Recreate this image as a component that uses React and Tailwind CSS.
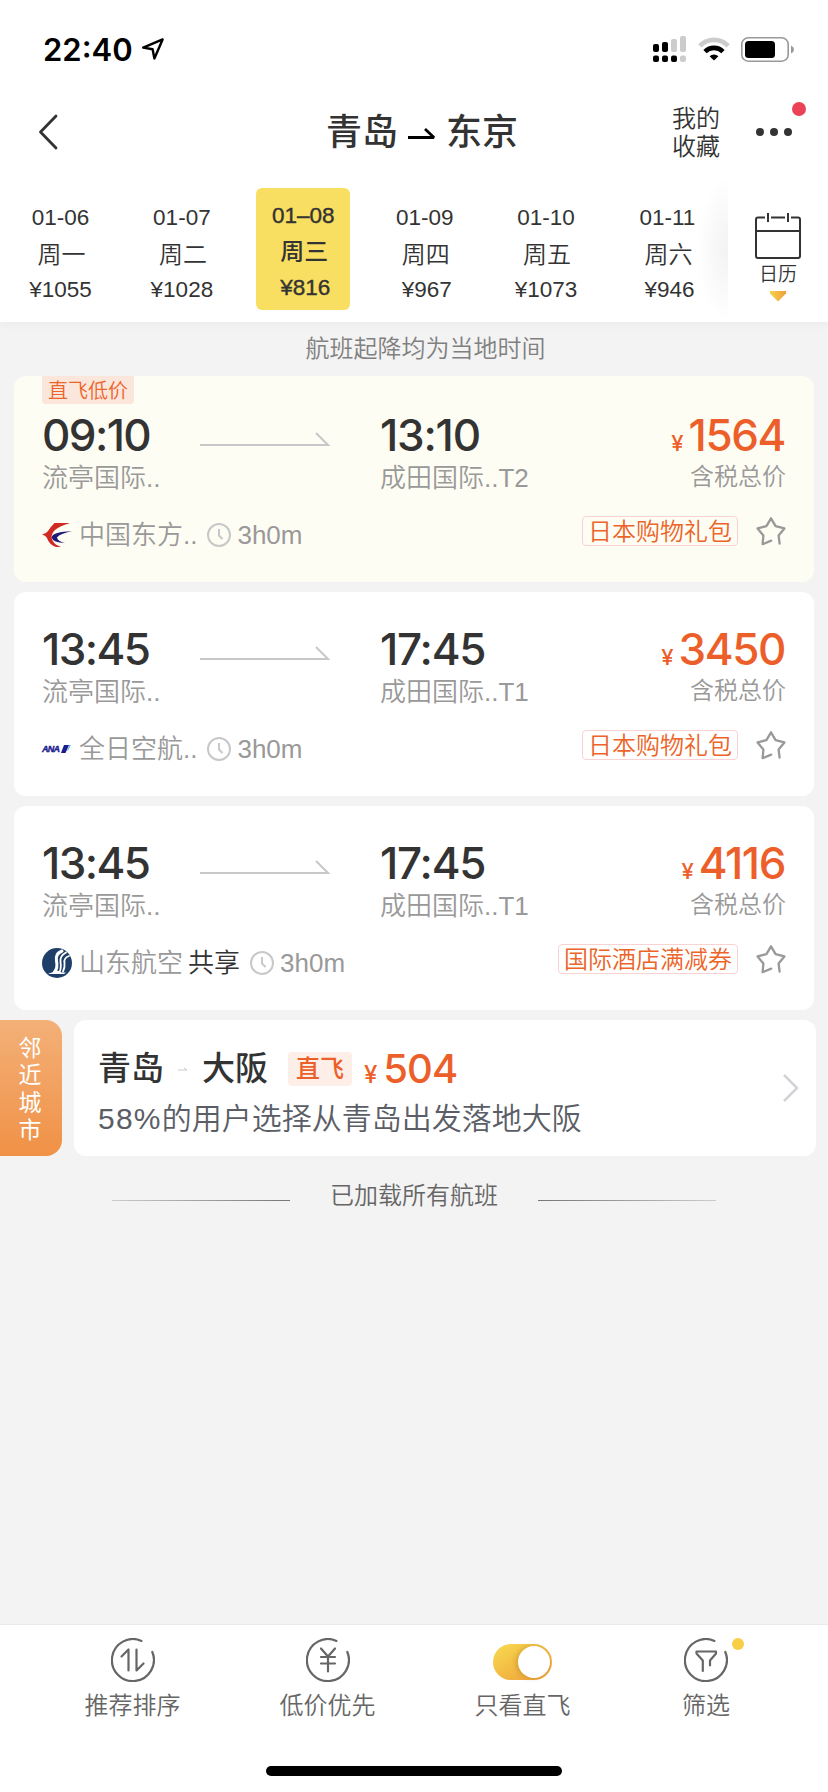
import React, { useState } from "react";

const dates = [
  { day: "01-06", week: "周一", price: 1055 },
  { day: "01-07", week: "周二", price: 1028 },
  { day: "01–08", week: "周三", price: 816 },
  { day: "01-09", week: "周四", price: 967 },
  { day: "01-10", week: "周五", price: 1073 },
  { day: "01-11", week: "周六", price: 946 },
];

const flights = [
  {
    id: 1,
    label: "直飞低价",
    depart: "09:10",
    from: "流亭国际..",
    arrive: "13:10",
    to: "成田国际..T2",
    airline: "中国东方..",
    logo: "mu",
    duration: "3h0m",
    price: 1564,
    coupon: "日本购物礼包",
  },
  {
    id: 2,
    depart: "13:45",
    from: "流亭国际..",
    arrive: "17:45",
    to: "成田国际..T1",
    airline: "全日空航..",
    logo: "nh",
    duration: "3h0m",
    price: 3450,
    coupon: "日本购物礼包",
  },
  {
    id: 3,
    depart: "13:45",
    from: "流亭国际..",
    arrive: "17:45",
    to: "成田国际..T1",
    airline: "山东航空",
    shared: true,
    logo: "sc",
    duration: "3h0m",
    price: 4116,
    coupon: "国际酒店满减券",
  },
];

const StatusBar = () => (
  <div className="h-[88px] flex items-center justify-between pl-[43px] pr-[34px] pt-[10px]">
    <div className="flex items-center">
      <span className="mt-[2px] font-['Inter'] font-semibold text-[31px] leading-[40px] text-black">22:40</span>
      <svg className="ml-[8px]" width="24" height="24" viewBox="0 0 24 24" fill="none">
        <path
          d="M2.2 10.6 L21.6 2.4 L13.4 21.4 L11.6 12.2 Z"
          stroke="#000"
          strokeWidth="2.4"
          strokeLinejoin="round"
        />
      </svg>
    </div>
    <div className="flex items-center gap-[11.500px]">
      <svg width="33" height="27" viewBox="0 0 33 27">
        <g fill="#000">
          <rect x="0" y="8" width="6" height="8" rx="2" />
          <rect x="9" y="6" width="6" height="10" rx="2" />
          <rect x="0" y="19.500" width="6" height="6.500" rx="2" />
          <rect x="9" y="19.500" width="6" height="6.500" rx="2" />
          <rect x="18" y="19.500" width="6" height="6.500" rx="2" />
        </g>
        <g fill="#ccc">
          <rect x="18" y="3" width="6" height="13" rx="2" />
          <rect x="27" y="0" width="6" height="16" rx="2" />
          <rect x="27" y="19.500" width="6" height="6.500" rx="2" />
        </g>
      </svg>
      <svg width="32" height="24" viewBox="0 0 32 24" fill="none">
        <path d="M1.800 8.800 A20 20 0 0 1 30.200 8.800" stroke="#ccc" strokeWidth="4.600" />
        <path d="M7 14.600 A12.700 12.700 0 0 1 25 14.600" stroke="#000" strokeWidth="4.600" />
        <path d="M16 23.500 L11.600 19.200 A6.300 6.300 0 0 1 20.400 19.200 Z" fill="#000" />
      </svg>
      <svg width="53" height="25" viewBox="0 0 53 25">
        <rect x="0.800" y="0.800" width="46.400" height="23.400" rx="6.500" fill="none" stroke="#999" strokeWidth="1.600" />
        <rect x="4" y="4" width="30" height="17" rx="3.500" fill="#000" />
        <path d="M50 8.500 Q53 10 53 12.500 Q53 15 50 16.500 Z" fill="#999" />
      </svg>
    </div>
  </div>
);

const Header = () => (
  <div className="h-[88px] flex items-center pl-[38px] pr-[29px]">
    <svg width="20" height="36" viewBox="0 0 20 36" fill="none">
      <path d="M18 2 L2.500 18 L18 34" stroke="#333" strokeWidth="2.800" strokeLinecap="round" strokeLinejoin="round" />
    </svg>
    <div className="ml-[268px] pt-[2px] flex items-center text-[36px] leading-[44px] font-medium text-[#333]">
      <span>青岛</span>
      <svg className="mx-[9px] mt-px" width="30" height="20" viewBox="0 0 30 20" fill="none">
        <path d="M1 13.500 H27 L18 5" stroke="#000" strokeWidth="2.800" strokeLinejoin="bevel" />
      </svg>
      <span>东京</span>
    </div>
    <div className="ml-auto w-12 pt-[2px] text-2xl leading-[28px] text-[#333]">我的收藏</div>
    <div className="relative ml-[36px] flex gap-[6px]">
      <i className="size-2 rounded-full bg-[#333]" />
      <i className="size-2 rounded-full bg-[#333]" />
      <i className="size-2 rounded-full bg-[#333]" />
      <i className="absolute -top-[26px] left-[36px] size-[14px] rounded-full bg-[#ec4255]" />
    </div>
    <div className="w-[7px]" />
  </div>
);

const DateStrip = () => {
  const [active, setActive] = useState(2);

  return (
    <div className="flex text-[#333]">
      <div className="relative w-[728px] overflow-hidden">
        <div className="flex gap-[27.400px] pl-[13px] pt-3 pb-3">
          {dates.map((item, index) => (
            <button
              key={item.day}
              onClick={() => setActive(index)}
              className={`w-[94px] h-[122px] shrink-0 rounded-md text-[22.500px] text-center ${
                index === active ? "bg-[#f9df61] font-medium pt-[9px] pb-[4px]" : "pt-[10px] pb-[3px]"
              }`}
            >
              <p className={`leading-[34px] pl-px ${index === active ? "[-webkit-text-stroke:0.4px_#333]" : ""}`}>
                {item.day}
              </p>
              <p className={`text-2xl pl-[3px] ${index === active ? "leading-[38px]" : "leading-[39px]"}`}>
                {item.week}
              </p>
              <p
                className={`${index === active ? "leading-[33px] [-webkit-text-stroke:0.4px_#333]" : "leading-[31px]"} ${
                  item.price < 1000 ? "pl-[5px]" : "pl-px"
                }`}
              >
                ¥{item.price}
              </p>
            </button>
          ))}
        </div>
        <div className="absolute right-0 top-0 bottom-0 w-8 bg-[radial-gradient(ellipse_at_right,rgba(0,0,0,0.05),transparent_70%)]" />
      </div>
      <div className="flex-1 flex flex-col items-center pt-[35px]">
        <svg width="48" height="49" viewBox="0 0 48 49" fill="none" stroke="#333" strokeWidth="2">
          <path d="M11 6.500 H4 Q2 6.500 2 8.500 V45 Q2 47 4 47 H44 Q46 47 46 45 V8.500 Q46 6.500 44 6.500 H37" />
          <path d="M17 6.500 H31 M14 2 V11 M34 2 V11 M2 20 H46" />
        </svg>
        <p className="text-[19px] leading-[26px] mt-[2px]">日历</p>
        <svg className="mt-[3px]" width="16" height="11" viewBox="0 0 16 11">
          <defs>
            <linearGradient id="tri">
              <stop offset="0" stopColor="#f6d24c" />
              <stop offset="1" stopColor="#ef9f3c" />
            </linearGradient>
          </defs>
          <path d="M0 0 H16 V2.500 L8 10.500 L0 2.500 Z" fill="url(#tri)" />
        </svg>
      </div>
    </div>
  );
};

const AirlineLogo = ({ code }) => {
  if (code === "mu") {
    return (
      <svg width="30" height="24" viewBox="0 0 30 24">
        <path d="M12.500 0 H28 Q17 3 12 8 Q8 13 10.500 17.500 Q13 22 19 24 H14 Q7 21.500 5 15 Q3.500 12 0 11.500 Q4 11 6 8 Q8.500 4 12.500 0 Z" fill="#d02a22" />
        <path d="M30 8.300 Q18 10.500 15 14.500 Q15.500 18 23 20 Q11 19.500 9.500 14.500 Q11 8.500 30 8.300 Z" fill="#1f1a78" />
      </svg>
    );
  }
  if (code === "nh") {
    return (
      <span className="w-[30px] flex items-center text-[#1c1c8c]">
        <span className="text-[9px] leading-[10px] font-bold italic tracking-[-0.800px] [-webkit-text-stroke:0.4px_#1c1c8c]">
          ANA
        </span>
        <svg className="ml-px" width="11" height="8" viewBox="0 0 11 8">
          <path d="M4 0 H9 L5.500 8 H1 Z" fill="#1c1c8c" />
          <path d="M9.300 0 H11 L8 5.500 H6.900 Z" fill="#5cb4ea" />
        </svg>
      </span>
    );
  }
  return (
    <svg width="30" height="30" viewBox="0 0 30 30">
      <circle cx="15" cy="15" r="15" fill="#1f3f68" />
      <g fill="none" stroke="#fff" strokeLinecap="round">
        <path d="M20 3 Q13 6 14.500 13 Q16 20 12.500 24" strokeWidth="3" />
        <path d="M24 4.500 Q17.500 8 18.500 14 Q19.500 20 17.500 24" strokeWidth="1.800" />
        <path d="M27 8 Q21.500 10 22.500 15 Q23 20 21 23.500" strokeWidth="1.800" />
      </g>
      <path d="M6 26 Q11 24.500 14 22 L20 24.500 H24 L22 26 Z" fill="#fff" />
    </svg>
  );
};

const ClockIcon = () => (
  <svg width="24" height="24" viewBox="0 0 24 24" fill="none" stroke="#c8c8c8" strokeWidth="2">
    <circle cx="12" cy="12" r="11" />
    <path d="M12 6 V12.500 L15.500 16" />
  </svg>
);

const StarIcon = () => (
  <svg width="30" height="30" viewBox="0 0 30 30" fill="none">
    <path
      d="M23.600 27.500 L22.600 19.500 L28.400 12.400 L19.600 10.200 L15 2.300 L10.400 10.200 L1.600 12.400 L7.400 19.500 L6.600 28.200 L15.200 24.600"
      stroke="#999"
      strokeWidth="2.300"
      strokeLinecap="round"
      strokeLinejoin="round"
    />
  </svg>
);

const FlightCard = ({ flight }) => (
  <div
    className={`relative rounded-xl px-7 pb-7 ${
      flight.label ? "bg-[#fefdf4] h-[206px] pt-[37px]" : "bg-white h-[204px] pt-[35px]"
    }`}
  >
    {flight.label && (
      <span className="absolute top-0 left-7 h-7 px-[6px] rounded-b bg-[#fbe6dc] text-[#ec6428] text-[20px] leading-[31px]">
        {flight.label}
      </span>
    )}
    <div className="flex items-start text-[26px] leading-[28px] text-[#999]">
      <div className="w-[158px]">
        <p className="font-['Inter'] font-medium text-[44px] leading-[44px] tracking-[-1.600px] text-[#333]">
          {flight.depart}
        </p>
        <p className="mt-[7px]">{flight.from}</p>
      </div>
      <svg className="mt-[18px]" width="130" height="18" viewBox="0 0 130 18" fill="none">
        <path d="M0 14 H128 L116 2" stroke="#c8c8c8" strokeWidth="2" />
      </svg>
      <div className="ml-[50px]">
        <p className="font-['Inter'] font-medium text-[44px] leading-[44px] tracking-[-1.200px] text-[#333]">
          {flight.arrive}
        </p>
        <p className="mt-[7px]">{flight.to}</p>
      </div>
      <div className="ml-auto text-right">
        <p className="font-['Inter'] font-medium text-[44px] leading-[44px] tracking-[-1.400px] pr-px text-[#ec5f2a]">
          <span className="text-[22px] leading-none tracking-normal mr-[5px]">¥</span>
          {flight.price}
        </p>
        <p className="mt-[6px] text-2xl leading-[28px]">含税总价</p>
      </div>
    </div>
    <div className="flex items-start justify-between mt-[24px]">
      <div className="flex items-center h-9 mt-px text-[26px] text-[#999]">
        <AirlineLogo code={flight.logo} />
        <span className="ml-[7px]">{flight.airline}</span>
        {flight.shared && <span className="ml-[5px] text-[#333]">共享</span>}
        <span className="ml-[10px] mr-[6px]">
          <ClockIcon />
        </span>
        <span>{flight.duration}</span>
      </div>
      <div className="flex items-center gap-[18px]">
        <span className="h-[30px] px-[5px] border border-[#f9d3d3] rounded text-2xl leading-[29px] text-[#ec6428]">
          {flight.coupon}
        </span>
        <StarIcon />
      </div>
    </div>
  </div>
);

const NearbyCity = () => (
  <div className="flex mt-[10px] h-[136px]">
    <div className="w-[62px] rounded-r-2xl bg-linear-to-b from-[#f3b077] to-[#f09145] flex flex-col items-center justify-center pt-[3px] pr-[2px] text-[23px] leading-[27.500px] font-normal text-white">
      <span>邻</span>
      <span>近</span>
      <span>城</span>
      <span>市</span>
    </div>
    <div className="ml-3 mr-3 flex-1 flex items-center justify-between bg-white rounded-xl pl-6 pr-4">
      <div className="pt-[11px]">
        <div className="flex items-center h-10 text-[33px] font-medium text-[#333]">
          <span>青岛</span>
          <svg className="mx-[14px]" width="10" height="4" viewBox="0 0 10 4">
            <path d="M0 3 H9 L6 1" stroke="#ccc" fill="none" />
          </svg>
          <span>大阪</span>
          <span className="ml-5 h-[34px] px-2 rounded bg-[#fdeee8] text-2xl leading-[34px] text-[#ec5f2a]">
            直飞
          </span>
          <p className="ml-3 font-['Inter'] text-[40px] leading-[40px] tracking-[-1px] text-[#ec5f2a]">
            <span className="text-2xl leading-none tracking-normal mr-[6px]">¥</span>
            504
          </p>
        </div>
        <p className="mt-[10px] text-[30px] leading-[40px] text-[#5b5e66]">
          <span className="tracking-[1.200px]">58%</span>的用户选择从青岛出发落地大阪
        </p>
      </div>
      <svg width="18" height="30" viewBox="0 0 18 30" fill="none">
        <path d="M2 2 L15 15 L2 28" stroke="#d2d2d8" strokeWidth="2.500" />
      </svg>
    </div>
  </div>
);

// circle with a gap at the upper right, shared by the round tab icons
const RingIcon = ({ children }) => (
  <svg width="44" height="44" viewBox="0 0 44 44" fill="none" stroke="#666" strokeWidth="2.200" strokeLinecap="round" strokeLinejoin="round">
    <path d="M30.500 2.900 A21 21 0 1 0 41.300 14" />
    {children}
  </svg>
);

const BottomBar = () => {
  const [directOnly, setDirectOnly] = useState(true);

  return (
    <div className="relative h-[168px] bg-white border-t border-[#ebebeb] flex items-start pl-[35px] pt-[13px] text-2xl leading-[30px] text-[#666]">
      <button className="w-[195px] flex flex-col items-center gap-[9px]">
        <RingIcon>
          <path d="M10.500 18.500 L17.500 11.500 V32.500 M25.500 11.500 V32.500 L32.500 25.500" />
        </RingIcon>
        推荐排序
      </button>
      <button className="w-[195px] flex flex-col items-center gap-[9px]">
        <RingIcon>
          <path d="M15 10.500 L22 18.500 L29 10.500 M15 19 H29 M15 25.500 H29 M22 18.500 V33.500" />
        </RingIcon>
        低价优先
      </button>
      <button className="w-[195px] flex flex-col items-center gap-[9px]" onClick={() => setDirectOnly(!directOnly)}>
        <span className="h-11 pt-[6px]">
          <span
            className={`flex w-[59px] h-9 rounded-full p-[2px] ${
              directOnly ? "justify-end bg-linear-to-br from-[#f8db50] to-[#ec9c38]" : "justify-start bg-gray-300"
            }`}
          >
            <i className="size-8 rounded-full bg-white shadow-[-2px_0_5px_rgba(120,80,0,0.25)]" />
          </span>
        </span>
        只看直飞
      </button>
      <button className="relative w-[172px] flex flex-col items-center gap-[9px]">
        <RingIcon>
          <path d="M18.800 33 V22.500 L12.500 15.500 V13.500 H32 V15.500 L26 22.500 V27.500" />
        </RingIcon>
        <i className="absolute top-0 left-[112px] size-3 rounded-full bg-[#f7ce46]" />
        筛选
      </button>
      <div className="absolute bottom-4 left-[266px] w-[296px] h-[10px] rounded-full bg-black" />
    </div>
  );
};

const App = () => {
  return (
    <div className="w-[828px] h-[1792px] flex flex-col overflow-hidden bg-[#f3f3f3] font-['Liberation_Sans','Noto_Sans_CJK_SC',sans-serif] font-[350]">
      <div className="bg-white shadow-[0_2px_10px_rgba(0,0,0,0.04)]">
        <StatusBar />
        <Header />
        <DateStrip />
      </div>

      <p className="h-[54px] text-center text-2xl leading-[54px] text-[#808080] pl-[23px]">
        航班起降均为当地时间
      </p>

      <div className="flex flex-col gap-[10px] px-[14px]">
        {flights.map((flight) => (
          <FlightCard key={flight.id} flight={flight} />
        ))}
      </div>

      <NearbyCity />

      <div className="flex items-center justify-center mt-[25px] text-2xl leading-[30px] text-[#666]">
        <div className="w-[178px] h-px mt-[9px] bg-linear-to-r from-[#ccc] to-[#777]" />
        <span className="mx-[40px]">已加载所有航班</span>
        <div className="w-[178px] h-px mt-[9px] bg-linear-to-r from-[#777] to-[#ccc]" />
      </div>

      <div className="mt-auto">
        <BottomBar />
      </div>
    </div>
  );
};

export default App;
